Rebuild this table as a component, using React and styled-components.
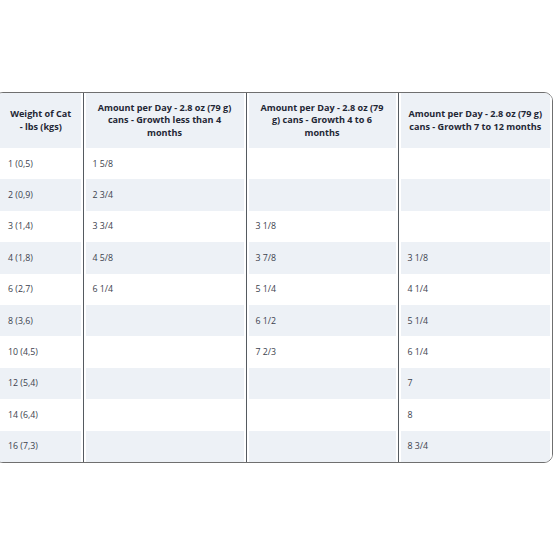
import React from "react";
import styled, { createGlobalStyle } from "styled-components";

const GlobalStyle = createGlobalStyle`
  html, body {
    margin: 0;
    padding: 0;
    background: #ffffff;
    overflow: hidden;
  }
  body {
    font-family: "Open Sans", "Liberation Sans", sans-serif;
  }
`;

const Page = styled.div`
  width: 554px;
  height: 554px;
  padding-top: 92px;
  box-sizing: border-box;
`;

const Frame = styled.div`
  margin-left: -6px;
  width: 559px;
  border: 1px solid #6f6f6f;
  border-radius: 9px;
  overflow: hidden;
  box-sizing: border-box;
`;

const Table = styled.table`
  width: 100%;
  border-collapse: collapse;
  table-layout: fixed;
`;

const Row = styled.tr`
  height: ${(p) => (p.$head ? "55px" : "31.4px")};
  background: ${(p) => (p.$shade ? "#edf1f6" : "#ffffff")};
`;

const HeadCell = styled.th`
  padding: 0 4px;
  font-size: 9.1px;
  line-height: 12.5px;
  font-weight: 700;
  color: #1f2735;
  text-align: center;
  vertical-align: middle;
  white-space: nowrap;
  border-left: ${(p) => (p.$first ? "none" : "1px solid #555a60")};
  box-shadow: ${(p) =>
    p.$first ? "inset -2px 0 0 #fff" : "inset 2px 0 0 #fff, inset -2px 0 0 #fff"};
  padding-left: ${(p) => (p.$first ? "8px" : "4px")};
`;

const Cell = styled.td`
  padding: 0 0 0 ${(p) => (p.$first ? "13px" : "9px")};
  font-size: 8.8px;
  color: #3c424d;
  text-align: left;
  vertical-align: middle;
  white-space: nowrap;
  border-left: ${(p) => (p.$first ? "none" : "1px solid #555a60")};
  box-shadow: ${(p) =>
    p.$first ? "inset -2px 0 0 #fff" : "inset 2px 0 0 #fff, inset -2px 0 0 #fff"};
`;

const headers = [
  ["Weight of Cat", "- lbs (kgs)"],
  ["Amount per Day - 2.8 oz (79 g)", "cans - Growth less than 4", "months"],
  ["Amount per Day - 2.8 oz (79", "g) cans - Growth 4 to 6", "months"],
  ["Amount per Day - 2.8 oz (79 g)", "cans - Growth 7 to 12 months"],
];

const rows = [
  ["1 (0,5)", "1 5/8", "", ""],
  ["2 (0,9)", "2 3/4", "", ""],
  ["3 (1,4)", "3 3/4", "3 1/8", ""],
  ["4 (1,8)", "4 5/8", "3 7/8", "3 1/8"],
  ["6 (2,7)", "6 1/4", "5 1/4", "4 1/4"],
  ["8 (3,6)", "", "6 1/2", "5 1/4"],
  ["10 (4,5)", "", "7 2/3", "6 1/4"],
  ["12 (5,4)", "", "", "7"],
  ["14 (6,4)", "", "", "8"],
  ["16 (7,3)", "", "", "8 3/4"],
];

const widths = [88, 163, 152, 154];

export default function App() {
  return (
    <Page>
      <GlobalStyle />
      <Frame>
        <Table>
          <colgroup>
            {widths.map((w, i) => (
              <col key={i} style={{ width: w }} />
            ))}
          </colgroup>
          <thead>
            <Row $head $shade>
              {headers.map((lines, i) => (
                <HeadCell key={i} $first={i === 0}>
                  {lines.map((l, j) => (
                    <React.Fragment key={j}>
                      {l}
                      {j < lines.length - 1 && <br />}
                    </React.Fragment>
                  ))}
                </HeadCell>
              ))}
            </Row>
          </thead>
          <tbody>
            {rows.map((r, i) => (
              <Row key={i} $shade={i % 2 === 1}>
                {r.map((c, j) => (
                  <Cell key={j} $first={j === 0}>
                    {c}
                  </Cell>
                ))}
              </Row>
            ))}
          </tbody>
        </Table>
      </Frame>
    </Page>
  );
}
